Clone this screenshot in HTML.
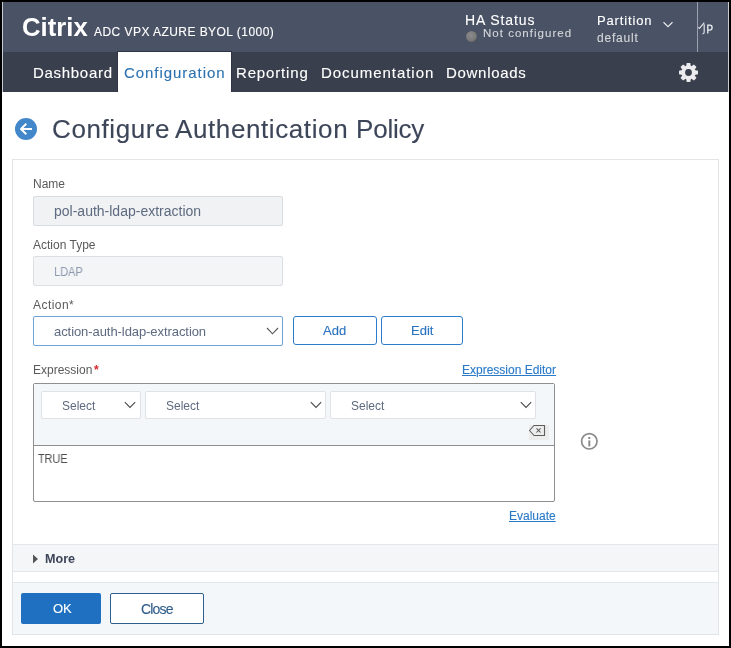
<!DOCTYPE html>
<html><head><meta charset="utf-8">
<style>
html,body{margin:0;padding:0;}
body{width:731px;height:648px;background:#000;position:relative;overflow:hidden;font-family:"Liberation Sans",sans-serif;}
.win{position:absolute;left:2px;top:2px;width:727px;height:644px;background:#fff;overflow:hidden;}
.a{position:absolute;}
.t{position:absolute;white-space:nowrap;line-height:1;will-change:transform;}
.m{-webkit-text-stroke:0.12px currentColor;}
</style></head><body>
<div class="win"></div>
<!-- header -->
<div class="a" style="left:2px;top:2px;width:1px;height:90px;background:#c9ccd3"></div>
<div class="a" style="left:3px;top:2px;width:725px;height:50px;background:#4a5265"></div>
<div class="a" style="left:728px;top:2px;width:1px;height:90px;background:#c9ccd3"></div>
<div class="a" style="left:3px;top:52px;width:725px;height:40px;background:#393f4c"></div>
<div class="a" style="left:117px;top:51px;width:115px;height:41px;background:#2e3443"></div>
<div class="a" style="left:118px;top:52px;width:113px;height:40px;background:#fff"></div>

<div class="t" style="left:22px;top:15px;font-size:25.7px;font-weight:bold;color:#fff">Citrix</div>
<div class="t m" style="left:94px;top:26px;font-size:12px;color:#fff;letter-spacing:0.45px">ADC VPX AZURE BYOL (1000)</div>
<div class="t m" style="left:465px;top:13px;font-size:14px;color:#fff;letter-spacing:0.9px">HA Status</div>
<div class="a" style="left:466px;top:31px;width:11px;height:11px;border-radius:50%;background:radial-gradient(circle at 42% 38%,#8c8c8c 0%,#7a7a7a 55%,#5e5e5e 85%,#4a4f5a 100%);box-shadow:0 0 0.5px #333"></div>
<div class="t m" style="left:483px;top:28px;font-size:11.5px;color:#d4d6da;letter-spacing:1.02px">Not configured</div>
<div class="t m" style="left:597px;top:14px;font-size:13px;color:#fff;letter-spacing:0.85px;font-weight:normal">Partition</div>
<div class="t m" style="left:597px;top:31.5px;font-size:12px;color:#d4d6da;letter-spacing:0.8px">default</div>
<svg class="a" style="left:662px;top:20px" width="12" height="9" viewBox="0 0 12 9"><path d="M1.5 2.2 L6 6.6 L10.5 2.2" fill="none" stroke="#e8e9ec" stroke-width="1.2"/></svg>
<div class="a" style="left:697px;top:2px;width:1px;height:50px;background:#9aa0ad"></div>
<svg class="a" style="left:694px;top:18px" width="24" height="20" viewBox="694 18 24 20"><path d="M698.3 27.3 L699.4 28.4 L704.3 22.6" fill="none" stroke="#e4e6ea" stroke-width="1.1"/><path d="M704.2 24.2 V32.2 Q704.1 33.6 702.5 33.8" fill="none" stroke="#dfe1e5" stroke-width="1.2"/><path d="M707.8 24.6 V33.4 M707.8 25.1 H709.8 Q712.1 25.1 712.1 27.6 Q712.1 30.1 709.8 30.1 H707.8" fill="none" stroke="#eceef1" stroke-width="1.3"/></svg>

<div class="t m" style="left:33px;top:65px;font-size:15px;color:#fff;letter-spacing:0.7px">Dashboard</div>
<div class="t m" style="left:124px;top:65px;font-size:15px;color:#2d72b0;letter-spacing:0.95px">Configuration</div>
<div class="t m" style="left:236px;top:65px;font-size:15px;color:#fff;letter-spacing:0.85px">Reporting</div>
<div class="t m" style="left:321px;top:65px;font-size:15px;color:#fff;letter-spacing:0.95px">Documentation</div>
<div class="t m" style="left:446px;top:65px;font-size:15px;color:#fff;letter-spacing:0.7px">Downloads</div>
<svg class="a" style="left:678px;top:62px" width="21" height="21" viewBox="-10.5 -10.5 21 21"><g fill="#ececee"><circle r="7"/><path d="M-2.4 -6 L-1.8 -9.5 L1.8 -9.5 L2.4 -6 Z" transform="rotate(0)"/><path d="M-2.4 -6 L-1.8 -9.5 L1.8 -9.5 L2.4 -6 Z" transform="rotate(45)"/><path d="M-2.4 -6 L-1.8 -9.5 L1.8 -9.5 L2.4 -6 Z" transform="rotate(90)"/><path d="M-2.4 -6 L-1.8 -9.5 L1.8 -9.5 L2.4 -6 Z" transform="rotate(135)"/><path d="M-2.4 -6 L-1.8 -9.5 L1.8 -9.5 L2.4 -6 Z" transform="rotate(180)"/><path d="M-2.4 -6 L-1.8 -9.5 L1.8 -9.5 L2.4 -6 Z" transform="rotate(225)"/><path d="M-2.4 -6 L-1.8 -9.5 L1.8 -9.5 L2.4 -6 Z" transform="rotate(270)"/><path d="M-2.4 -6 L-1.8 -9.5 L1.8 -9.5 L2.4 -6 Z" transform="rotate(315)"/></g><circle r="3.4" fill="#393f4c"/></svg>

<!-- title -->
<svg class="a" style="left:15px;top:118px" width="22" height="22" viewBox="0 0 22 22"><circle cx="11" cy="11" r="11" fill="#4287c9"/><path d="M17 11 H6.2 M11.3 5.8 L6 11 L11.3 16.2" fill="none" stroke="#fff" stroke-width="1.9" stroke-linecap="butt" stroke-linejoin="round"/></svg>
<div class="t m" style="left:52px;top:116px;font-size:26px;color:#3d4659;letter-spacing:0.6px">Configure</div><div class="t m" style="left:175px;top:116px;font-size:26px;color:#3d4659;letter-spacing:0.6px">Authentication</div><div class="t m" style="left:356px;top:116px;font-size:26px;color:#3d4659;letter-spacing:-0.2px">Policy</div>

<!-- panel -->
<div class="a" style="left:12px;top:159px;width:705px;height:474px;border:1px solid #e1e5e8;background:#fff"></div>

<div class="t" style="left:33px;top:178px;font-size:12px;color:#5a5a5a">Name</div>
<div class="a" style="left:33px;top:196px;width:248px;height:28px;border:1px solid #d8dbdf;border-radius:2px;background:#f1f2f4"></div>
<div class="t" style="left:54px;top:204px;font-size:14px;color:#5d6a7f;letter-spacing:0px">pol-auth-ldap-extraction</div>

<div class="t" style="left:33px;top:239px;font-size:12px;color:#5a5a5a">Action Type</div>
<div class="a" style="left:33px;top:256px;width:248px;height:28px;border:1px solid #dcdee2;border-radius:2px;background:#f4f5f7"></div>
<div class="t" style="left:54px;top:266px;font-size:12px;color:#8d99ad;transform:scaleX(0.92);transform-origin:0 0">LDAP</div>

<div class="t" style="left:33px;top:299px;font-size:12px;color:#5a5a5a;letter-spacing:0.45px">Action*</div>
<div class="a" style="left:33px;top:316px;width:248px;height:28px;border:1px solid #6ea3da;border-radius:2px;background:#fff"></div>
<div class="t" style="left:54px;top:325px;font-size:13px;color:#5d6a7f;letter-spacing:-0.07px">action-auth-ldap-extraction</div>
<svg class="a" style="left:266px;top:326px" width="14" height="10" viewBox="0 0 14 10"><path d="M1 2 L6.5 7.8 L12 2" fill="none" stroke="#555" stroke-width="1.1"/></svg>

<div class="a" style="left:293px;top:316px;width:82px;height:27px;border:1px solid #2d7ccc;border-radius:3px;background:#fff"></div>
<div class="t m" style="left:323px;top:324px;font-size:13px;color:#2b73bf">Add</div>
<div class="a" style="left:381px;top:316px;width:80px;height:27px;border:1px solid #2d7ccc;border-radius:3px;background:#fff"></div>
<div class="t m" style="left:411px;top:324px;font-size:13px;color:#2b73bf">Edit</div>

<div class="t" style="left:33px;top:364px;font-size:12px;color:#5a5a5a">Expression</div>
<div class="t" style="left:93.5px;top:364px;font-size:12px;font-weight:bold;color:#d9262b">*</div>
<div class="t m" style="left:462px;top:364px;font-size:12px;color:#2a7ac8;text-decoration:underline">Expression Editor</div>

<div class="a" style="left:33px;top:383px;width:520px;height:117px;border:1px solid #8f8f8f;border-radius:2px;background:#fff"></div>
<div class="a" style="left:34px;top:384px;width:520px;height:61px;background:#f4f7fa;border-bottom:1px solid #8f8f8f"></div>

<div class="a" style="left:41px;top:391px;width:98px;height:26px;border:1px solid #dfe2e6;border-radius:2px;background:#fff"></div>
<div class="t" style="left:62px;top:400px;font-size:12px;color:#5d6a7f">Select</div>
<svg class="a" style="left:123px;top:400px" width="14" height="10" viewBox="0 0 14 10"><path d="M1.8 2.2 L7 7.4 L12.2 2.2" fill="none" stroke="#484848" stroke-width="1.05"/></svg>

<div class="a" style="left:145px;top:391px;width:179px;height:26px;border:1px solid #dfe2e6;border-radius:2px;background:#fff"></div>
<div class="t" style="left:165.5px;top:400px;font-size:12px;color:#5d6a7f">Select</div>
<svg class="a" style="left:309px;top:400px" width="14" height="10" viewBox="0 0 14 10"><path d="M1.8 2.2 L7 7.4 L12.2 2.2" fill="none" stroke="#484848" stroke-width="1.05"/></svg>

<div class="a" style="left:330px;top:391px;width:204px;height:26px;border:1px solid #dfe2e6;border-radius:2px;background:#fff"></div>
<div class="t" style="left:351px;top:400px;font-size:12px;color:#5d6a7f">Select</div>
<svg class="a" style="left:519px;top:400px" width="14" height="10" viewBox="0 0 14 10"><path d="M1.8 2.2 L7 7.4 L12.2 2.2" fill="none" stroke="#484848" stroke-width="1.05"/></svg>

<div class="a" style="left:529px;top:425px;width:20px;height:15px;background:#ececec"></div>
<svg class="a" style="left:528px;top:424px" width="19" height="13" viewBox="0 0 19 13"><path d="M1.5 6.5 L6 1.5 H16.5 V11.5 H6 Z" fill="none" stroke="#5c5c5c" stroke-width="1.1" stroke-linejoin="round"/><path d="M8.5 4.3 L12.6 8.5 M12.6 4.3 L8.5 8.5" stroke="#5c5c5c" stroke-width="1.05"/></svg>

<div class="t" style="left:38px;top:453px;font-size:12px;color:#4d4d4d;transform:scaleX(0.9);transform-origin:0 0">TRUE</div>

<svg class="a" style="left:580px;top:432px" width="19" height="19" viewBox="0 0 19 19"><circle cx="9.3" cy="9.3" r="7.7" fill="none" stroke="#8a8a8a" stroke-width="1.7"/><rect x="8.3" y="8.4" width="2" height="6" fill="#8a8a8a"/><rect x="8.3" y="5" width="2" height="2" fill="#8a8a8a"/></svg>

<div class="t m" style="left:509px;top:510px;font-size:12px;color:#2a7ac8;text-decoration:underline">Evaluate</div>

<!-- more -->
<div class="a" style="left:13px;top:544px;width:705px;height:26px;border-top:1px solid #e3e6ea;border-bottom:1px solid #e3e6ea;background:#f4f6f8"></div>
<svg class="a" style="left:32px;top:554px" width="7" height="10" viewBox="0 0 7 10"><path d="M1 0.5 L6 5 L1 9.5 Z" fill="#555"/></svg>
<div class="t" style="left:45px;top:553px;font-size:12.6px;font-weight:bold;color:#3d4659">More</div>

<!-- footer -->
<div class="a" style="left:13px;top:582px;width:705px;height:51px;border-top:1px solid #e3e6ea;background:#f4f7fa"></div>
<div class="a" style="left:21px;top:593px;width:80px;height:31px;border-radius:2px;background:#1f70c1"></div>
<div class="t m" style="left:52.5px;top:601.5px;font-size:13px;color:#fff">OK</div>
<div class="a" style="left:110px;top:593px;width:92px;height:29px;border:1px solid #2e5f8f;border-radius:2px;background:#fff"></div>
<div class="t m" style="left:141px;top:601.5px;font-size:14px;color:#2e5c8a;letter-spacing:-0.8px">Close</div>
</body></html>
